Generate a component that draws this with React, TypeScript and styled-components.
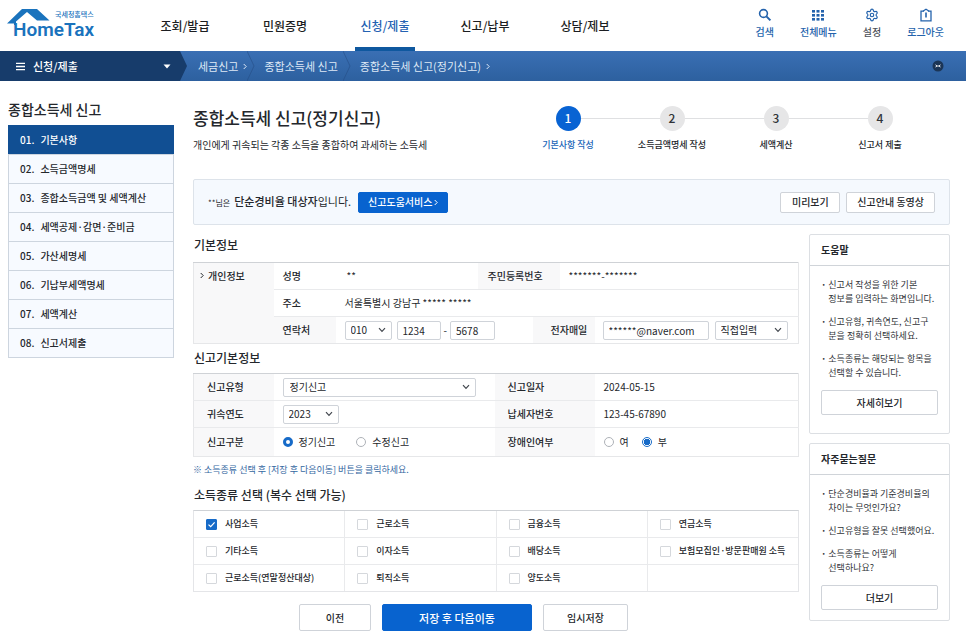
import React, { useState } from "react";
import styled, { createGlobalStyle, css } from "styled-components";
import { Settings } from "lucide-react";

const GlobalStyle = createGlobalStyle`
  *, *::before, *::after { box-sizing: border-box; }
  body {
    margin: 0;
    background: #fff;
    color: #24272c;
    font-family: "Noto Sans CJK KR", "Noto Sans", sans-serif;
    font-size: 10px;
    line-height: 14px;
    word-break: keep-all;
  }
  button, input, select { font: inherit; color: inherit; margin: 0; }
  h1, h2, h3, p, ul, ol, fieldset { margin: 0; padding: 0; }
  ul, ol { list-style: none; }
  fieldset { border: 0; min-width: 0; }
  a { color: inherit; text-decoration: none; }
`;

/* ---------- header ---------- */

const Header = styled.header`
  display: flex;
  align-items: stretch;
  height: 51px;
  padding: 0 22px 0 7px;
`;

const LogoLink = styled.a`
  display: flex;
  flex-direction: column;
  width: 148px;
  padding-top: 8px;
  color: #1a73bd;
`;

const LogoTop = styled.span`
  display: flex;
  gap: 4px;
  height: 14px;
  font-size: 7px;
  font-weight: 500;
  line-height: 13px;
`;

const LogoRoof = styled.svg`
  flex: none;
  overflow: visible;
`;

const LogoName = styled.span`
  padding-left: 6px;
  font-family: Roboto, sans-serif;
  font-size: 19px;
  font-weight: 600;
  line-height: 16px;
`;

const MainNav = styled.nav`
  display: flex;
  gap: 40px;
`;

const NavLink = styled.a<{ $active?: boolean }>`
  display: flex;
  align-items: center;
  justify-content: center;
  width: 60px;
  padding-top: 4px;
  border-bottom: 4px solid ${(p) => (p.$active ? "#0f589f" : "transparent")};
  color: ${(p) => (p.$active ? "#2462b2" : "#1c1e22")};
  font-size: 12px;
  font-weight: 500;
  white-space: nowrap;
`;

const Utilities = styled.div`
  display: flex;
  gap: 26px;
  margin-left: auto;
  padding-top: 8px;
`;

const UtilityButton = styled.button<{ $muted?: boolean }>`
  display: flex;
  flex-direction: column;
  align-items: center;
  gap: 3px;
  height: 32px;
  padding: 0;
  border: 0;
  background: none;
  color: ${(p) => (p.$muted ? "#4b5058" : "#2463ac")};
  font-weight: 500;
  line-height: 14px;
  white-space: nowrap;
  cursor: pointer;
  svg { flex: none; color: #2463ac; }
`;

/* ---------- breadcrumb bar ---------- */

const PathBar = styled.div`
  display: flex;
  height: 30px;
  padding-right: 22px;
  background: linear-gradient(#3a6fb4, #2d609f);
  color: #dfe9f6;
  font-size: 11px;
`;

const SectionButton = styled.button`
  display: flex;
  align-items: center;
  width: 187px;
  padding: 0 16px;
  border: 0;
  background: #173c6b;
  clip-path: polygon(0 0, 180px 0, 187px 50%, 180px 100%, 0 100%);
  color: #fff;
  font-weight: 500;
  cursor: pointer;
  span { margin: 0 auto 0 8px; }
`;

const Crumbs = styled.ol`
  display: flex;
  align-items: center;
  padding-left: 11px;
  white-space: nowrap;
`;

const Crumb = styled.li<{ $spaced?: boolean }>`
  display: flex;
  align-items: center;
  gap: 5px;
  padding-right: ${(p) => (p.$spaced ? "5px" : "0")};
`;

const CrumbDivider = styled.svg`
  margin-right: 9px;
`;

const CollapseButton = styled.button`
  display: flex;
  align-items: center;
  margin-left: auto;
  padding: 0;
  border: 0;
  background: none;
  cursor: pointer;
`;

/* ---------- page frame ---------- */

const Page = styled.div`
  display: flex;
  align-items: flex-start;
  gap: 19px;
  padding: 20px 16px 15px 8px;
`;

const SideMenu = styled.nav`
  flex: none;
  width: 166px;
`;

const SideTitle = styled.h2`
  font-size: 14px;
  font-weight: 500;
  line-height: 16px;
  padding-bottom: 8px;
`;

const SideList = styled.ol`
  border: 1px solid #cdd5df;
  border-top: 0;
`;

const SideLink = styled.a<{ $active?: boolean }>`
  display: flex;
  gap: 6px;
  align-items: center;
  height: 29px;
  padding-left: 11px;
  background: #f7faff;
  font-weight: 500;
  li + li & { border-top: 1px solid #cdd5df; }
  ${(p) =>
    p.$active &&
    css`
      margin: 0 -1px;
      padding-left: 12px;
      background: #114f93;
      color: #fff;
    `}
`;

const Content = styled.main`
  flex: 1;
  min-width: 0;
`;

const Intro = styled.div`
  display: flex;
  justify-content: space-between;
  padding: 4px 18px 0 0;
  height: 78px;
`;

const Title = styled.h1`
  font-size: 17px;
  font-weight: 500;
  line-height: 26px;
`;

const Subtitle = styled.p`
  padding-top: 7px;
`;

const Steps = styled.ol`
  display: grid;
  grid-template-columns: repeat(4, 104px);
  padding-top: 1px;
`;

const Step = styled.li<{ $active?: boolean }>`
  display: flex;
  flex-direction: column;
  gap: 7px;
  text-align: center;
  font-size: 9px;
  font-weight: 500;
  white-space: nowrap;
  ${(p) => p.$active && "color: #2065b8;"}
`;

const StepTrack = styled.span`
  display: flex;
  align-items: center;
  &::before, &::after {
    content: "";
    flex: 1;
    height: 1px;
    background: #dfe0e2;
  }
  li:first-child &::before, li:last-child &::after { background: none; }
`;

const StepNumber = styled.span<{ $active?: boolean }>`
  width: 25px;
  height: 25px;
  border-radius: 50%;
  background: ${(p) => (p.$active ? "#0863d3" : "#e6e6e7")};
  color: ${(p) => (p.$active ? "#fff" : "#303338")};
  font-size: 12px;
  line-height: 24px;
`;

const Notice = styled.section`
  display: flex;
  align-items: center;
  gap: 6px;
  height: 46px;
  margin-bottom: 9px;
  padding: 0 14px;
  border: 1px solid #dde3ea;
  border-radius: 2px;
  background: #f5f9fe;
`;

const NoticeText = styled.p`
  margin-right: 1px;
  font-size: 11px;
  small { font-size: 8px; margin-right: 4px; }
  strong { font-weight: 500; }
`;

const Spacer = styled.span`
  flex: 1;
`;

const Button = styled.button<{ $primary?: boolean; $width?: string; $tall?: boolean }>`
  width: ${(p) => p.$width ?? "auto"};
  height: ${(p) => (p.$tall ? "27px" : "21px")};
  padding: 0 10px;
  border: 1px solid ${(p) => (p.$primary ? "#0863cf" : "#cfd3d9")};
  border-radius: 2px;
  background: ${(p) => (p.$primary ? "#0863cf" : "#fff")};
  color: ${(p) => (p.$primary ? "#fff" : "#24272c")};
  font-weight: 500;
  line-height: 14px;
  white-space: nowrap;
  cursor: pointer;
`;

const HelpButton = styled(Button)`
  display: flex;
  align-items: center;
  gap: 2px;
  padding: 0 9px;
`;

const SubmitButton = styled(Button)`
  font-size: 11px;
`;

const Columns = styled.div`
  display: flex;
  align-items: flex-start;
  gap: 10px;
`;

const Form = styled.form`
  flex: 1;
  min-width: 0;
`;

const SectionTitle = styled.h2<{ $first?: boolean }>`
  font-size: 12px;
  font-weight: 500;
  line-height: 16px;
  padding: 3px 0 ${(p) => (p.$first ? "9px" : "7px")} 1px;
`;

/* ---------- tables ---------- */

const DataTable = styled.table<{ $spaced?: boolean }>`
  width: 100%;
  margin-bottom: ${(p) => (p.$spaced ? "3px" : "0")};
  border-collapse: collapse;
  table-layout: fixed;
  border: 1px solid #e6e7e9;
  border-top-color: #cfd2d6;
  tr + tr > * { border-top: 1px solid #e9eaec; }
`;

const Label = styled.th<{ $plain?: boolean; $indent?: number }>`
  height: 27px;
  padding: 0 0 0 ${(p) => p.$indent ?? 13}px;
  background: ${(p) => (p.$plain ? "#fff" : "#f8f8f9")};
  font-weight: 500;
  text-align: left;
  white-space: nowrap;
`;

const GroupLabel = styled(Label)`
  padding: 6px 0 0 6px;
  vertical-align: top;
  svg { margin-right: 4px; vertical-align: 1px; }
`;

const Value = styled.td<{ $indent?: number; $tall?: boolean }>`
  height: ${(p) => (p.$tall ? "29px" : "27px")};
  padding: 0 0 0 ${(p) => p.$indent ?? 9}px;
  white-space: nowrap;
`;

const FieldRow = styled.div<{ $gap: number }>`
  display: flex;
  align-items: center;
  gap: ${(p) => p.$gap}px;
`;

const TextField = styled.input<{ $width: number }>`
  width: ${(p) => p.$width}px;
  height: 19px;
  padding: 0 5px;
  border: 1px solid #cfd3d9;
  border-radius: 2px;
  background: #fff;
`;

const chevron =
  "url(\"data:image/svg+xml,%3Csvg xmlns='http://www.w3.org/2000/svg' width='8' height='6' viewBox='0 0 8 6'%3E%3Cpath d='M1 1.2 4 4.4 7 1.2' fill='none' stroke='%2343484f' stroke-width='1.2'/%3E%3C/svg%3E\")";
const tick =
  "url(\"data:image/svg+xml,%3Csvg xmlns='http://www.w3.org/2000/svg' width='9' height='9' viewBox='0 0 9 9'%3E%3Cpath d='M1.5 4.6 3.7 6.7 7.6 2.4' fill='none' stroke='white' stroke-width='1.2'/%3E%3C/svg%3E\")";

const SelectField = styled.select<{ $width: number; $indent?: number }>`
  appearance: none;
  width: ${(p) => p.$width}px;
  height: 19px;
  padding: 0 14px 0 ${(p) => p.$indent ?? 5}px;
  border: 1px solid #cfd3d9;
  border-radius: 2px;
  background: #fff ${chevron} no-repeat right 5px center;
`;

const Choice = styled.label`
  display: flex;
  align-items: center;
  gap: 6px;
`;

const RadioGroup = styled.div<{ $gap: number }>`
  display: flex;
  gap: ${(p) => p.$gap}px;
`;

const Radio = styled.input`
  appearance: none;
  width: 10px;
  height: 10px;
  border: 1px solid #aeb2b8;
  border-radius: 50%;
  background: #fff;
  &:checked { border: 3px solid #176bc8; }
`;

const RingRadio = styled(Radio)`
  &:checked {
    border: 1px solid #176bc8;
    background: radial-gradient(circle, #176bc8 0 3px, #fff 3px);
  }
`;

const Hint = styled.p`
  padding: 6px 0 7px;
  color: #34679f;
  font-size: 9px;
`;

const OptionGrid = styled.fieldset`
  display: grid;
  grid-template-columns: repeat(4, 1fr);
  gap: 1px;
  border: 1px solid #e4e5e8;
  border-top-color: #cfd2d6;
  background: #e9eaec;
`;

const Option = styled.label`
  display: flex;
  align-items: center;
  gap: 8px;
  height: 26px;
  padding-left: 12px;
  background: #fff;
  font-size: 9px;
  font-weight: 500;
  white-space: nowrap;
`;

const CheckBox = styled.input`
  appearance: none;
  flex: none;
  width: 11px;
  height: 11px;
  border: 1px solid #d5d8dc;
  border-radius: 1px;
  background: #fff;
  &:checked { border-color: #176bc8; background: #176bc8 ${tick} center no-repeat; }
`;

const Actions = styled.div`
  display: flex;
  gap: 11px;
  padding: 12px 0 0 106px;
`;

/* ---------- aside ---------- */

const Aside = styled.aside`
  flex: none;
  display: flex;
  flex-direction: column;
  gap: 9px;
  width: 141px;
`;

const Card = styled.section`
  border: 1px solid #dcdfe3;
  border-radius: 2px;
`;

const CardTitle = styled.h3`
  padding: 8px 11px;
  border-bottom: 1px solid #d0d4d9;
  font-size: 10px;
  font-weight: 600;
  line-height: 14px;
`;

const CardBody = styled.div<{ $bottom: number }>`
  display: flex;
  flex-direction: column;
  gap: 10px;
  padding: 12px 11px ${(p) => p.$bottom}px;
`;

const Bullets = styled.ul`
  display: flex;
  flex-direction: column;
  gap: 9px;
  font-size: 9px;
  line-height: 14px;
  white-space: nowrap;
`;

const Bullet = styled.li`
  display: flex;
  gap: 2px;
  color: #2f3338;
  &::before { content: "·"; font-weight: 700; }
`;

const CardButton = styled(Button)`
  height: 25px;
`;

const Arrow = () => (
  <svg width="4" height="7" viewBox="0 0 4 7" fill="none" stroke="currentColor" aria-hidden="true">
    <path d="M.7 1 3.2 3.5.7 6" />
  </svg>
);

const Divider = () => (
  <CrumbDivider width="8" height="30" viewBox="0 0 8 30" fill="none" stroke="#264f87" strokeOpacity=".6" aria-hidden="true">
    <path d="M0 0 7 15 0 30" />
  </CrumbDivider>
);

const navItems = ["조회/발급", "민원증명", "신청/제출", "신고/납부", "상담/제보"];
const sideItems = ["기본사항", "소득금액명세", "종합소득금액 및 세액계산", "세액공제·감면·준비금", "가산세명세", "기납부세액명세", "세액계산", "신고서제출"];
const steps = ["기본사항 작성", "소득금액명세 작성", "세액계산", "신고서 제출"];
const incomeTypes = [
  "사업소득", "근로소득", "금융소득", "연금소득",
  "기타소득", "이자소득", "배당소득", "보험모집인·방문판매원 소득",
  "근로소득(연말정산대상)", "퇴직소득", "양도소득",
];

export default function App() {
  const [selected, setSelected] = useState<string[]>(["사업소득"]);
  const toggle = (name: string) =>
    setSelected((s) => (s.includes(name) ? s.filter((n) => n !== name) : [...s, name]));

  return (
    <>
      <GlobalStyle />
      <Header>
        <LogoLink href="#">
          <LogoTop>
            <LogoRoof width="44" height="17" viewBox="0 0 44 17" aria-hidden="true">
              <path d="M15 1h15L42.500 12.500H30L20 4 9 13.500V17H7V15.500H0Z" fill="#1a73bd" />
            </LogoRoof>
            국세청홈택스
          </LogoTop>
          <LogoName>HomeTax</LogoName>
        </LogoLink>
        <MainNav>
          {navItems.map((n) => (
            <NavLink key={n} href="#" $active={n === "신청/제출"}>{n}</NavLink>
          ))}
        </MainNav>
        <Utilities>
          <UtilityButton>
            <svg width="14" height="14" viewBox="0 0 14 14" fill="none" stroke="currentColor" strokeWidth="1.600">
              <circle cx="5.500" cy="5.500" r="3.900" />
              <path d="m8.400 8.400 4 4" strokeWidth="2" />
            </svg>
            검색
          </UtilityButton>
          <UtilityButton>
            <svg width="14" height="14" viewBox="0 0 14 14" fill="currentColor">
              {[2, 6, 10].map((y) => [1, 5.5, 10].map((x) => <rect key={`${x}-${y}`} x={x} y={y} width="3" height="2.600" />))}
            </svg>
            전체메뉴
          </UtilityButton>
          <UtilityButton $muted>
            <Settings size={14} strokeWidth={2} />
            설정
          </UtilityButton>
          <UtilityButton>
            <svg width="14" height="14" viewBox="0 0 14 14" fill="none" stroke="currentColor" strokeWidth="1.300">
              <path d="M4.500 3.200H2v9.600h10V3.200H9.500" />
              <path d="M4.500 3.800V2.800L7 1.200l2.500 1.600v1" />
              <path d="M7 4.500V9.500" strokeWidth="1.600" />
            </svg>
            로그아웃
          </UtilityButton>
        </Utilities>
      </Header>

      <PathBar>
        <SectionButton>
          <svg width="9" height="9" viewBox="0 0 9 9" stroke="#fff" strokeWidth="1.300" aria-hidden="true">
            <path d="M0 1.300h9M0 4.500h9M0 7.700h9" />
          </svg>
          <span>신청/제출</span>
          <svg width="8" height="5" viewBox="0 0 8 5" fill="#fff" aria-hidden="true"><path d="M.5.500h7L4 4.500Z" /></svg>
        </SectionButton>
        <Crumbs>
          <Crumb><a href="#">세금신고</a><Arrow /></Crumb>
          <Divider />
          <Crumb $spaced><a href="#">종합소득세 신고</a></Crumb>
          <Divider />
          <Crumb><a href="#">종합소득세 신고(정기신고)</a><Arrow /></Crumb>
        </Crumbs>
        <CollapseButton aria-label="메뉴 접기">
          <svg width="12" height="12" viewBox="0 0 12 12">
            <circle cx="6" cy="6" r="5.500" fill="#1b3556" />
            <path d="M3.500 4.800 5 6l-1.500 1M8.500 4.800 7 6l1.500 1M4.500 6h3" fill="none" stroke="#fff" strokeWidth=".9" />
          </svg>
        </CollapseButton>
      </PathBar>

      <Page>
        <SideMenu>
          <SideTitle>종합소득세 신고</SideTitle>
          <SideList>
            {sideItems.map((name, i) => (
              <li key={name}>
                <SideLink href="#" $active={i === 0}><span>{`0${i + 1}.`}</span>{name}</SideLink>
              </li>
            ))}
          </SideList>
        </SideMenu>

        <Content>
          <Intro>
            <div>
              <Title>종합소득세 신고(정기신고)</Title>
              <Subtitle>개인에게 귀속되는 각종 소득을 종합하여 과세하는 소득세</Subtitle>
            </div>
            <Steps>
              {steps.map((name, i) => (
                <Step key={name} $active={i === 0}>
                  <StepTrack><StepNumber $active={i === 0}>{i + 1}</StepNumber></StepTrack>
                  {name}
                </Step>
              ))}
            </Steps>
          </Intro>

          <Notice>
            <NoticeText><small>**님은</small><strong>단순경비율 대상자</strong>입니다.</NoticeText>
            <HelpButton $primary>신고도움서비스 <Arrow /></HelpButton>
            <Spacer />
            <Button $width="60px">미리보기</Button>
            <Button>신고안내 동영상</Button>
          </Notice>

          <Columns>
            <Form onSubmit={(e) => e.preventDefault()}>
              <SectionTitle $first>기본정보</SectionTitle>
              <DataTable $spaced>
                <colgroup>
                  <col width="80" /><col width="62" /><col width="142" /><col width="55" />
                  <col width="27" /><col width="35" /><col />
                </colgroup>
                <tbody>
                  <tr>
                    <GroupLabel rowSpan={3} scope="rowgroup"><Arrow />개인정보</GroupLabel>
                    <Label $plain $indent={9}>성명</Label>
                    <Value $indent={11}>**</Value>
                    <Label colSpan={2} $indent={10}>주민등록번호</Label>
                    <Value colSpan={2}>*******-*******</Value>
                  </tr>
                  <tr>
                    <Label $plain $indent={9}>주소</Label>
                    <Value colSpan={5}>서울특별시 강남구 ***** *****</Value>
                  </tr>
                  <tr>
                    <Label $indent={9}>연락처</Label>
                    <Value colSpan={2}>
                      <FieldRow $gap={5}>
                        <SelectField aria-label="연락처 앞자리" $width={47} defaultValue="010"><option>010</option></SelectField>
                        <FieldRow $gap={3}>
                          <TextField aria-label="연락처 가운데자리" $width={44} defaultValue="1234" />
                          -
                          <TextField aria-label="연락처 끝자리" $width={45} defaultValue="5678" />
                        </FieldRow>
                      </FieldRow>
                    </Value>
                    <Label colSpan={2} $indent={18}><label htmlFor="email">전자매일</label></Label>
                    <Value $indent={8}>
                      <FieldRow $gap={6}>
                        <TextField id="email" $width={106} defaultValue="******@naver.com" />
                        <SelectField aria-label="이메일 도메인" $width={73} defaultValue="직접입력"><option>직접입력</option></SelectField>
                      </FieldRow>
                    </Value>
                  </tr>
                </tbody>
              </DataTable>

              <SectionTitle>신고기본정보</SectionTitle>
              <DataTable>
                <colgroup><col width="80" /><col /><col width="100" /><col width="204" /></colgroup>
                <tbody>
                  <tr>
                    <Label><label htmlFor="type">신고유형</label></Label>
                    <Value>
                      <SelectField id="type" $width={193} $indent={6} defaultValue="정기신고"><option>정기신고</option></SelectField>
                    </Value>
                    <Label>신고일자</Label>
                    <Value>2024-05-15</Value>
                  </tr>
                  <tr>
                    <Label><label htmlFor="year">귀속연도</label></Label>
                    <Value>
                      <SelectField id="year" $width={56} defaultValue="2023"><option>2023</option></SelectField>
                    </Value>
                    <Label>납세자번호</Label>
                    <Value>123-45-67890</Value>
                  </tr>
                  <tr>
                    <Label id="kind">신고구분</Label>
                    <Value $tall>
                      <RadioGroup role="radiogroup" aria-labelledby="kind" $gap={21}>
                        <Choice><Radio type="radio" name="kind" defaultChecked />정기신고</Choice>
                        <Choice><Radio type="radio" name="kind" />수정신고</Choice>
                      </RadioGroup>
                    </Value>
                    <Label id="disabled">장애인여부</Label>
                    <Value $tall>
                      <RadioGroup role="radiogroup" aria-labelledby="disabled" $gap={13}>
                        <Choice><RingRadio type="radio" name="disabled" />여</Choice>
                        <Choice><RingRadio type="radio" name="disabled" defaultChecked />부</Choice>
                      </RadioGroup>
                    </Value>
                  </tr>
                </tbody>
              </DataTable>
              <Hint>※ 소득종류 선택 후 [저장 후 다음이동] 버튼을 클릭하세요.</Hint>

              <SectionTitle>소득종류 선택 (복수 선택 가능)</SectionTitle>
              <OptionGrid aria-label="소득종류 선택">
                {incomeTypes.map((name) => (
                  <Option key={name}>
                    <CheckBox type="checkbox" checked={selected.includes(name)} onChange={() => toggle(name)} />
                    {name}
                  </Option>
                ))}
                <Option as="span" />
              </OptionGrid>

              <Actions>
                <Button type="button" $tall $width="72px">이전</Button>
                <SubmitButton type="submit" $primary $tall $width="150px">저장 후 다음이동</SubmitButton>
                <Button type="button" $tall $width="85px">임시저장</Button>
              </Actions>
            </Form>

            <Aside>
              <Card>
                <CardTitle>도움말</CardTitle>
                <CardBody $bottom={18}>
                  <Bullets>
                    <Bullet><span>신고서 작성을 위한 기본<br />정보를 입력하는 화면입니다.</span></Bullet>
                    <Bullet><span>신고유형, 귀속연도, 신고구<br />분을 정확히 선택하세요.</span></Bullet>
                    <Bullet><span>소득종류는 해당되는 항목을<br />선택할 수 있습니다.</span></Bullet>
                  </Bullets>
                  <CardButton>자세히보기</CardButton>
                </CardBody>
              </Card>
              <Card>
                <CardTitle>자주묻는질문</CardTitle>
                <CardBody $bottom={10}>
                  <Bullets>
                    <Bullet><span>단순경비율과 기준경비율의<br />차이는 무엇인가요?</span></Bullet>
                    <Bullet><span>신고유형을 잘못 선택했어요.</span></Bullet>
                    <Bullet><span>소득종류는 어떻게<br />선택하나요?</span></Bullet>
                  </Bullets>
                  <CardButton>더보기</CardButton>
                </CardBody>
              </Card>
            </Aside>
          </Columns>
        </Content>
      </Page>
    </>
  );
}
